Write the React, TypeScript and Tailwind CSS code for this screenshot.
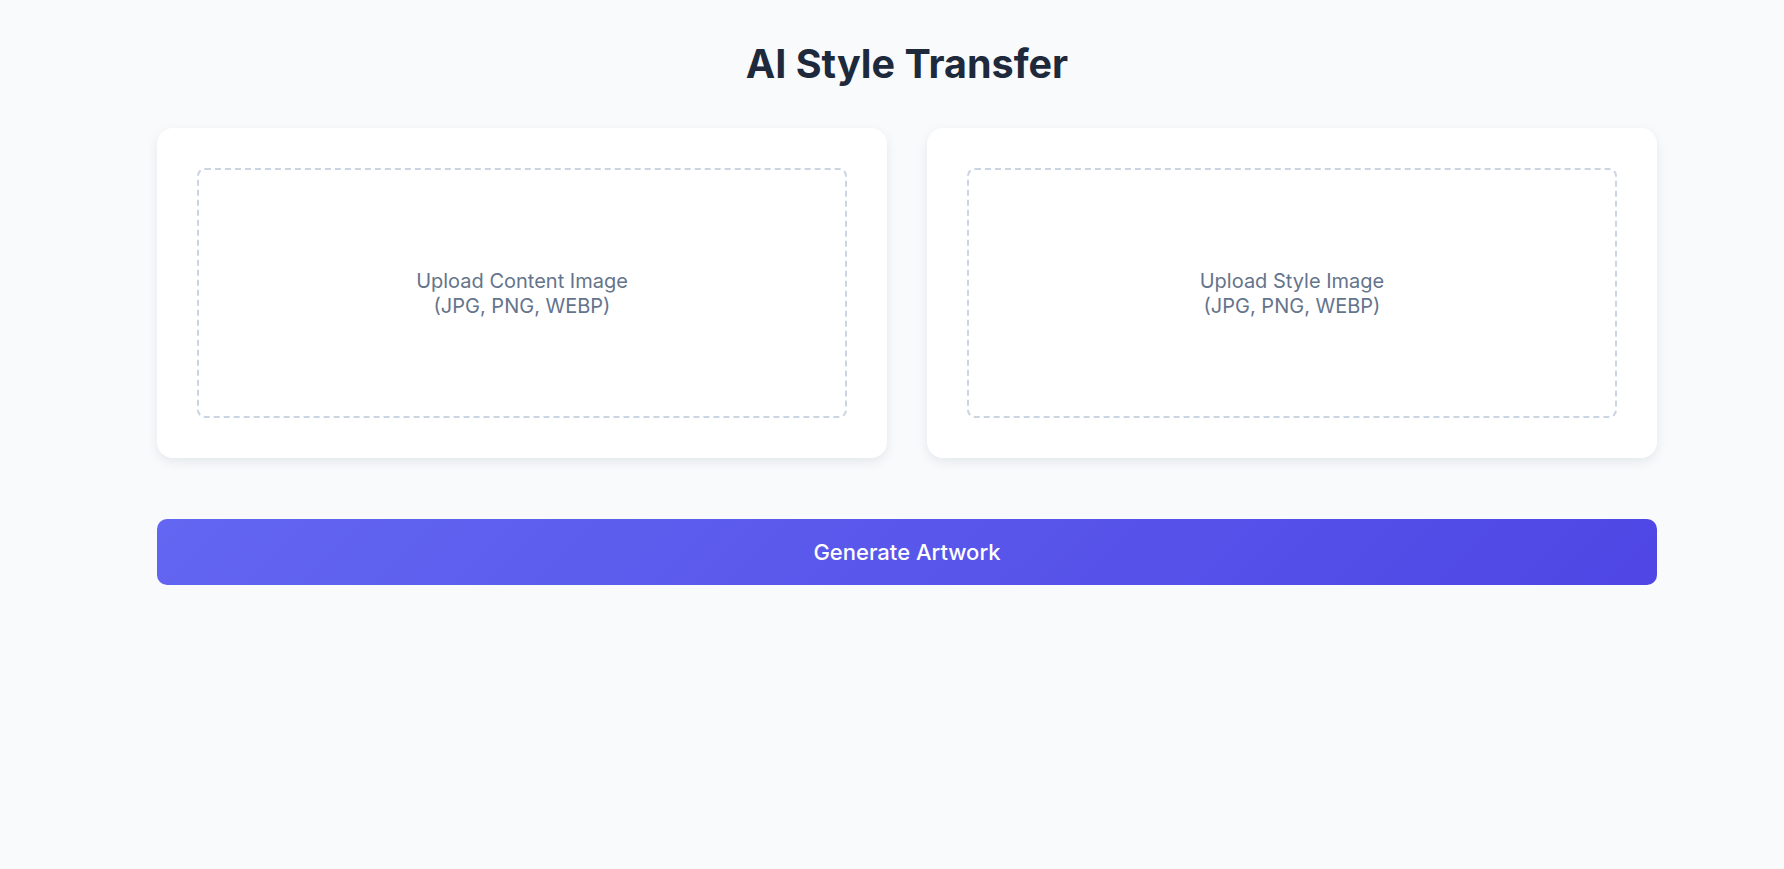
export default function App() {
  const zones = [
    { id: 'content', label: 'Upload Content Image' },
    { id: 'style', label: 'Upload Style Image' },
  ];

  return (
    <div className="min-h-screen bg-[#f8fafc] font-['Inter',sans-serif] pt-[40px]">
      <div className="ml-[157px] w-[1500px]">
        <h1 className="text-center text-[39.5px] leading-[48px] font-bold text-[#1e293b] mb-[40px]">
          AI Style Transfer
        </h1>

        {/* ── Upload cards ── */}
        <div className="grid grid-cols-2 gap-10">
          {zones.map(z => (
            <div
              key={z.id}
              className="bg-white rounded-2xl p-10 shadow-[0_4px_12px_rgba(15,23,42,0.08)]"
            >
              <div className="h-[250px] pt-[2px] border-2 border-dashed border-[#cbd5e1] rounded-lg flex items-center justify-center text-center text-[20px] leading-[25px] text-[#64748b] cursor-pointer">
                <span>
                  {z.label}
                  <br />
                  (JPG, PNG, WEBP)
                </span>
              </div>
            </div>
          ))}
        </div>

        <button className="mt-[61px] w-full h-[66px] rounded-[10px] bg-linear-135 from-[#6366f1] to-[#4f46e5] text-white text-[22px] font-medium">
          Generate Artwork
        </button>
      </div>
    </div>
  );
}
